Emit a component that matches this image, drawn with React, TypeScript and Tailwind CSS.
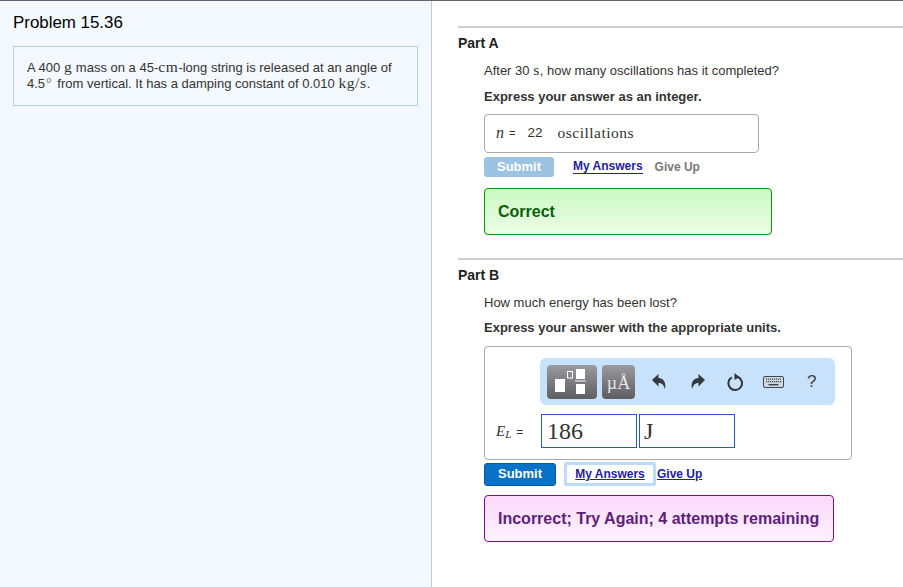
import type { ReactNode } from "react";

const sans = "font-['Liberation_Sans',Arial,sans-serif]";
const math = "font-['Liberation_Serif','Times_New_Roman',serif]";

function M({ children }: { children: ReactNode }) {
  return <span className={`${math} text-[15.500px] leading-none tracking-[0.6px]`}>{children}</span>;
}

function Toolbar() {
  return (
    <div className="ml-[55px] flex h-[47px] w-[295px] items-center rounded-[6px] bg-[#c8e2fb] pl-[7px]">
      {/* templates button */}
      <div className="h-[34px] w-[50px] rounded-[4px] bg-gradient-to-b from-[#9a9a9f] to-[#5e5e62]">
        <svg width="50" height="34" viewBox="0 0 50 34">
          <rect x="8" y="14" width="10" height="13" fill="#fff" />
          <rect x="20.500" y="6.500" width="5" height="6.500" fill="none" stroke="#fff" strokeWidth="1" />
          <rect x="29" y="4" width="9" height="10" fill="#fff" />
          <rect x="28" y="15.500" width="11" height="1" fill="#fff" />
          <rect x="29" y="19" width="9" height="10" fill="#fff" />
        </svg>
      </div>
      {/* symbols button */}
      <div className={`ml-[5px] flex h-[34px] w-[33px] items-end justify-center rounded-[4px] bg-gradient-to-b from-[#9a9a9f] to-[#5e5e62] pb-[7px] ${math} text-[18px] leading-none text-[#e6e6e8]`}>
        µÅ
      </div>
      <svg className="ml-[17px]" width="14" height="15" viewBox="0 0 14 15">
        <path d="M0 6 6.500 0v4C11 4 14.500 8 13 15c-1.500-4.500-3.500-6-6.500-6v3.500z" fill="#333a42" />
      </svg>
      <svg className="ml-[25px]" width="14" height="15" viewBox="0 0 14 15">
        <path d="M14 6 7.500 0v4C3 4-.5 8 1 15c1.500-4.500 3.500-6 6.500-6v3.500z" fill="#333a42" />
      </svg>
      <svg className="ml-[22px]" width="17" height="18" viewBox="0 0 17 18">
        <path d="M4.800 4.300a6.800 6.800 0 1 0 6.200-.3" fill="none" stroke="#2f343b" strokeWidth="2" />
        <path d="M7.500 0 12.500 4l-5 3z" fill="#2f343b" />
      </svg>
      <svg className="ml-[19px]" width="21" height="12" viewBox="0 0 21 12">
        <rect x="0.500" y="0.500" width="20" height="11" rx="1.500" fill="#cfd9e4" stroke="#3f454d" />
        <path d="M3 3.200h15M3 5.700h15" stroke="#3f454d" strokeWidth="1.300" strokeDasharray="1.200 0.800" />
        <path d="M5.500 8.700h10" stroke="#3f454d" strokeWidth="1.500" />
      </svg>
      <span className={`ml-[23px] text-[17px] leading-none text-[#3a3f47] ${sans}`}>?</span>
    </div>
  );
}

export default function App() {
  return (
    <div className={`flex h-[587px] w-[903px] overflow-hidden border-t border-[#666] bg-white text-[#333] ${sans}`}>
      {/* Left panel */}
      <div className="h-full w-[432px] shrink-0 border-r border-[#b9cbdc] bg-[#f4f9ff] pl-[13px] pr-[13px] pt-[13px]">
        <h1 className="text-[16.900px] leading-[18px] text-black">Problem 15.36</h1>
        <div className="mt-[14px] h-[60px] w-[405px] border border-[#b9cfe0] pl-[13px] pt-[12px] text-[13px] leading-[16px] text-[#333]">
          <p className="h-[16px]">
            A 400 <M>g</M> mass on a 45-<M>cm</M>-long string is released at an angle of
          </p>
          <p className="h-[16px]">
            4.5<span className={`${math} ml-[1px] mr-[2px] text-[14px] leading-none text-[#666]`}>°</span> from vertical. It has a damping constant of 0.010 <M>kg/s</M>.
          </p>
        </div>
      </div>

      {/* Right panel */}
      <div className="flex-1 pl-[26px] pt-[25px]">
        <section className="h-[232px] border-t-2 border-[#ccc]">
          <h2 className="mt-[8px] text-[14px] font-bold leading-[15px] text-[#222]">Part A</h2>
          <div className="pl-[26px]">
            <p className="mt-[11px] h-[16px] text-[13px] leading-[15px]">
              After 30 <M>s</M>, how many oscillations has it completed?
            </p>
            <p className="mt-[11px] text-[13px] font-bold leading-[15px]">Express your answer as an integer.</p>
            <div className="mt-[10px] flex h-[39px] w-[275px] items-center rounded-[4px] border border-[#aaa] pb-[1px] pl-[11px] text-[13px]">
              <span className={`${math} text-[16px] italic`}>n</span>
              <span className="ml-[5px] text-[11px]">=</span>
              <span className="ml-[12px] text-[13.500px]">22</span>
              <span className={`ml-[15px] ${math} text-[15.500px] tracking-[0.5px]`}>oscillations</span>
            </div>
            <div className="mt-[4px] flex h-[20px] items-center text-[12px] font-bold">
              <button className="h-[20px] w-[70px] rounded-[3px] bg-[#9cc3e1] text-center text-[13px] text-white">Submit</button>
              <a className="ml-[19px] border-b border-[#22229c] leading-[13px] text-[#22229c]">My Answers</a>
              <span className="ml-[12px] text-[#777]">Give Up</span>
            </div>
            <div className="mt-[11px] flex h-[47px] w-[288px] items-center rounded-[4px] border border-[#0a9a0a] bg-gradient-to-b from-[#ccf9c2] to-[#ebfee5] pl-[13px] text-[16px] font-bold text-[#0b5f0b]">
              Correct
            </div>
          </div>
        </section>

        <section className="border-t-2 border-[#ccc]">
          <h2 className="mt-[8px] text-[14px] font-bold leading-[15px] text-[#222]">Part B</h2>
          <div className="pl-[26px]">
            <p className="mt-[12px] text-[13px] leading-[15px]">How much energy has been lost?</p>
            <p className="mt-[10px] text-[13px] font-bold leading-[15px]">Express your answer with the appropriate units.</p>
            <div className="mt-[11px] h-[114px] w-[368px] rounded-[4px] border border-[#aaa] pt-[11px]">
              <Toolbar />
              <div className="mt-[9px] flex items-center pl-[11px]">
                <span className={`${math} flex w-[33px] items-baseline text-[15px] italic leading-none`}>
                  E<sub className="text-[11px] leading-none">L</sub>
                  <span className={`ml-[5px] not-italic ${sans} text-[12px]`}>=</span>
                </span>
                <div className={`ml-[12px] flex h-[34px] w-[96px] items-center border border-[#2b57c9] pl-[5px] ${math} text-[24px] text-[#333]`}>186</div>
                <div className={`ml-[2px] flex h-[34px] w-[96px] items-center border border-[#2b57c9] pl-[4px] ${math} text-[24px] text-[#333]`}>J</div>
              </div>
            </div>
            <div className="mt-[2px] flex h-[24px] items-center text-[12px] font-bold">
              <button className="h-[23px] w-[72px] rounded-[3px] border border-[#045a9e] bg-[#0672c8] text-center text-[13px] text-white">Submit</button>
              <a className="ml-[8px] flex h-[24px] w-[92px] items-center justify-center rounded-[2px] border-[3px] border-[#bcdcfb] text-[#22229c] underline">My Answers</a>
              <a className="ml-px text-[#22229c] underline">Give Up</a>
            </div>
            <div className="mt-[9px] flex h-[47px] w-[350px] items-center rounded-[4px] border border-[#7b0f8f] bg-gradient-to-b from-[#fcd8fb] to-[#fdf2fe] pl-[13px] text-[16px] font-bold text-[#5d1f7b]">
              Incorrect; Try Again; 4 attempts remaining
            </div>
          </div>
        </section>
      </div>
    </div>
  );
}
